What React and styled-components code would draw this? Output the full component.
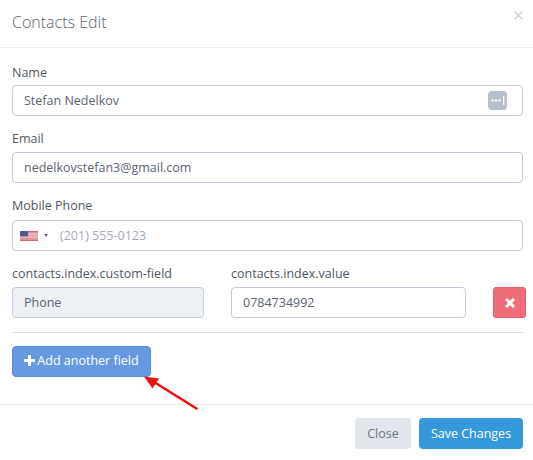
import React from "react";
import styled, { createGlobalStyle } from "styled-components";

const Global = createGlobalStyle`
  html, body { margin: 0; padding: 0; background: #fff; }
  body { font-family: "Open Sans", "Noto Sans", sans-serif; color: #4b5563; }
`;

const Modal = styled.div`
  position: relative;
  width: 533px;
  height: 460px;
  background: #fff;
  overflow: hidden;
`;
const Header = styled.header`
  height: 47px;
  border-bottom: 1px solid #edeff2;
  padding: 0 10px 0 12px;
  display: flex;
  align-items: center;
  justify-content: space-between;
`;
const Title = styled.h4`
  margin: -4px 0 0;
  font-size: 16px;
  font-weight: 300;
  color: #5d6670;
  line-height: 44px;
`;
const CloseX = styled.svg`
  width: 9px;
  height: 9px;
  margin: -17px 0 0 0;
  display: block;
`;
const Body = styled.div`
  padding: 16px 10px 0 12px;
  height: 340px;
`;
const Field = styled.div`
  margin-bottom: ${(p) => p.$mb ?? 14}px;
`;
const Label = styled.label`
  display: block;
  font-size: 12.5px;
  line-height: 17px;
  color: #4f5861;
  margin-bottom: ${(p) => p.$mb ?? 5}px;
`;
const InputBox = styled.div`
  height: 31px;
  box-sizing: border-box;
  border: 1px solid #c3ccdb;
  border-radius: 4px;
  background: ${(p) => (p.$disabled ? "#edf0f5" : "#fff")};
  display: flex;
  align-items: center;
  padding: 0 5px 0 11px;
  font-size: 12.5px;
  color: #5b6470;
`;
const InputText = styled.span`
  flex: 1;
  color: ${(p) => (p.$placeholder ? "#a4abb4" : "inherit")};
`;
const KeyBadge = styled.span`
  width: 19px;
  height: 19px;
  border-radius: 4px;
  background: #b7bfce;
  margin-right: 10px;
  display: flex;
  align-items: center;
  justify-content: center;
`;
const FlagWrap = styled.span`
  display: flex;
  align-items: center;
  width: 30px;
  margin: 0 10px 0 -4px;
`;
const Caret = styled.span`
  width: 0;
  height: 0;
  margin-left: 6px;
  border-left: 2px solid transparent;
  border-right: 2px solid transparent;
  border-top: 3px solid #666;
`;
const CustomRow = styled.div`
  display: grid;
  grid-template-columns: 192px 235px 33px;
  column-gap: 27px;
  width: 514px;
  align-items: end;
`;
const DeleteButton = styled.button`
  height: 31px;
  padding: 0;
  border: 1px solid #e4606d;
  border-radius: 3px;
  background: #f06c78;
  display: flex;
  align-items: center;
  justify-content: center;
`;
const Rule = styled.hr`
  border: 0;
  border-top: 1px solid #dfe2e6;
  margin: 14px 0 13px;
`;
const AddButton = styled.button`
  height: 31px;
  width: 139px;
  box-sizing: border-box;
  padding: 0 0 2px;
  border: 1px solid #5a90db;
  border-radius: 4px;
  background: #659ae3;
  color: #fff;
  font: 400 12.5px "Open Sans", sans-serif;
  display: flex;
  align-items: center;
  justify-content: center;
  gap: 2px;
`;
const Footer = styled.footer`
  border-top: 1px solid #e4e6e9;
  padding: 13px 10px 0 0;
  display: flex;
  justify-content: flex-end;
  gap: 8px;
`;
const FooterButton = styled.button`
  height: 31px;
  width: ${(p) => p.$w}px;
  padding: 0;
  border: 0;
  border-radius: 4px;
  background: ${(p) => (p.$primary ? "#3498db" : "#e1e5ec")};
  color: ${(p) => (p.$primary ? "#fff" : "#6f7780")};
  font: 400 12.5px "Open Sans", sans-serif;
`;
const Arrow = styled.svg`
  position: absolute;
  left: 140px;
  top: 370px;
  width: 62px;
  height: 45px;
`;

export default function App() {
  return (
    <Modal>
      <Global />
      <Header>
        <Title>Contacts Edit</Title>
        <CloseX viewBox="0 0 9 9">
          <path d="M.5.5l8 8M8.5.5l-8 8" stroke="#c9cdd1" strokeWidth="1.1" fill="none" />
        </CloseX>
      </Header>
      <Body>
        <Field $mb={14}>
          <Label $mb={4}>Name</Label>
          <InputBox>
            <InputText>Stefan Nedelkov</InputText>
            <KeyBadge>
              <svg width="15" height="9" viewBox="0 0 15 9">
                <circle cx="2.5" cy="4.5" r="1.2" fill="#fff" />
                <circle cx="6" cy="4.5" r="1.2" fill="#fff" />
                <circle cx="9.5" cy="4.5" r="1.2" fill="#fff" />
                <rect x="13" y="0" width="1.3" height="9" fill="#fff" />
              </svg>
            </KeyBadge>
          </InputBox>
        </Field>
        <Field $mb={14}>
          <Label>Email</Label>
          <InputBox>
            <InputText>nedelkovstefan3@gmail.com</InputText>
          </InputBox>
        </Field>
        <Field $mb={14}>
          <Label $mb={6}>Mobile Phone</Label>
          <InputBox>
            <FlagWrap>
              <svg width="18" height="10" viewBox="0 0 20 11">
                <rect width="20" height="11" fill="#e39a9e" />
                <rect y="0" width="20" height="1" fill="#d9636a" />
                <rect y="3" width="20" height="1" fill="#efdcdc" />
                <rect y="6" width="20" height="1" fill="#efdcdc" />
                <rect y="9.8" width="20" height="1.2" fill="#d9636a" />
                <rect width="9" height="6" fill="#55588f" />
              </svg>
              <Caret />
            </FlagWrap>
            <InputText $placeholder>(201) 555-0123</InputText>
          </InputBox>
        </Field>
        <CustomRow>
          <div>
            <Label>contacts.index.custom-field</Label>
            <InputBox $disabled>
              <InputText>Phone</InputText>
            </InputBox>
          </div>
          <div>
            <Label>contacts.index.value</Label>
            <InputBox>
              <InputText>0784734992</InputText>
            </InputBox>
          </div>
          <DeleteButton aria-label="Remove">
            <svg width="10" height="10" viewBox="0 0 10 10">
              <path d="M2 2l6 6M8 2l-6 6" stroke="#fff" strokeWidth="3" strokeLinecap="square" />
            </svg>
          </DeleteButton>
        </CustomRow>
        <Rule />
        <AddButton>
          <svg width="11" height="11" viewBox="0 0 11 11">
            <path d="M5.5 1v9M1 5.5h9" stroke="#fff" strokeWidth="3" strokeLinecap="round" />
          </svg>
          Add another field
        </AddButton>
      </Body>
      <Footer>
        <FooterButton $w={56}>Close</FooterButton>
        <FooterButton $primary $w={104}>Save Changes</FooterButton>
      </Footer>
      <Arrow viewBox="0 0 62 45">
        <path d="M56.5 38.5L14 12" stroke="#f00f0f" strokeWidth="2.6" strokeLinecap="round" />
        <path d="M4 6.5L19 8.5L12.5 18.5Z" fill="#f00f0f" />
      </Arrow>
    </Modal>
  );
}
